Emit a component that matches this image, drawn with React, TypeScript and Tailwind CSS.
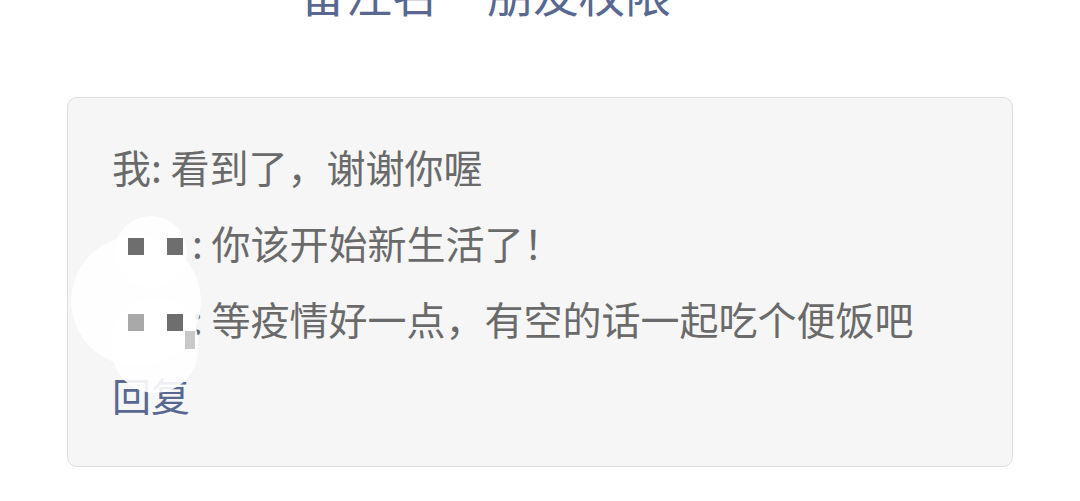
const font = { fontFamily: '"Noto Sans CJK SC", "Noto Sans", sans-serif' };

const NameMask = ({ light = false, extra = false }: { light?: boolean; extra?: boolean }) => (
  <span className="relative z-20 inline-block w-[80px] h-[1em] align-middle">
    <span className={`absolute left-[16px] top-[15px] w-[16px] h-[17px] ${light ? 'bg-[#a9a9a9]' : 'bg-[#6e6e6e]'}`} />
    <span className="absolute left-[55px] top-[15px] w-[16px] h-[17px] bg-[#6e6e6e]" />
    {extra && <span className="absolute left-[73px] top-[32px] w-[10px] h-[18px] bg-[#c9c9c9]" />}
  </span>
);

export default function App() {
  return (
    <div className="w-[1080px] h-[501px] bg-white overflow-hidden" style={font}>
      {/* header, scrolled off the top */}
      <div className="flex gap-[49px] pl-[300px] -mt-[31px] text-[46px] leading-[46px] text-[#586890]">
        <span>备注名</span>
        <span>朋友权限</span>
      </div>

      {/* comments */}
      <div className="relative ml-[67px] mt-[82px] w-[946px] h-[370px] rounded-[10px] border border-[#dedede] bg-[#f6f6f6] pl-[44px] pt-[30px] text-[39px] leading-[76px] text-[#6a6a6a]">
        <div>我: 看到了，谢谢你喔</div>
        <div className="flex items-center">
          <NameMask />
          <span>: 你该开始新生活了！</span>
        </div>
        <div className="flex items-center">
          <NameMask light extra />
          <span>: 等疫情好一点，有空的话一起吃个便饭吧</span>
        </div>
        <div className="text-[#586890]">回复</div>

        {/* white blot over names */}
        <div className="absolute z-10 left-[3px] top-[138px] w-[130px] h-[130px] rounded-full bg-white/90 shadow-[0_0_1px_rgba(0,0,0,0.06)]" />
        <div className="absolute z-10 left-[47px] top-[118px] w-[72px] h-[72px] rounded-full bg-white/90" />
        <div className="absolute z-10 left-[44px] top-[200px] w-[86px] h-[95px] rounded-full bg-white/90" />
      </div>
    </div>
  );
}
